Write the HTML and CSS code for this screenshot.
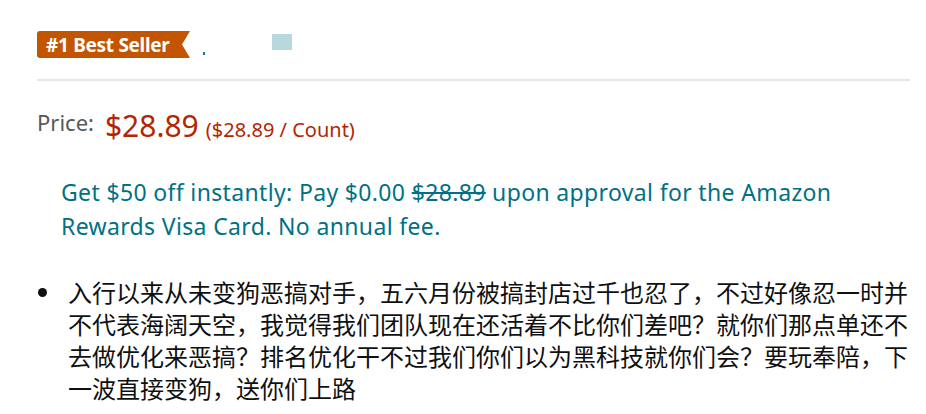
FILE: index.html
```html
<!DOCTYPE html>
<html lang="en">
<head>
<meta charset="utf-8">
<link rel="stylesheet" href="styles.css">
</head>
<body>
<div class="page">
  <div class="badge-row">
    <span class="badge">#1 Best Seller</span>
    <span class="dot"></span>
    <span class="square"></span>
  </div>
  <div class="divider"></div>
  <div class="price-row">
    <span class="price-label">Price:</span>
    <span class="price">$28.89</span>
    <span class="unit">($28.89 / Count)</span>
  </div>
  <p class="offer">Get $50 off instantly: Pay $0.00 <s>$28.89</s> upon approval for the Amazon Rewards Visa Card. No annual fee.</p>
  <ul class="bullets">
    <li>入行以来从未变狗恶搞对手，五六月份被搞封店过千也忍了，不过好像忍一时并不代表海阔天空，我觉得我们团队现在还活着不比你们差吧？就你们那点单还不去做优化来恶搞？排名优化干不过我们你们以为黑科技就你们会？要玩奉陪，下一波直接变狗，送你们上路</li>
  </ul>
</div>
</body>
</html>
```
FILE: styles.css
```css
html, body {
  margin: 0;
  background: #fff;
}
.page {
  width: 873px;
  margin-left: 37px;
  padding-top: 31px;
  font-family: "Noto Sans", "Open Sans", sans-serif;
}
.badge-row {
  display: flex;
  align-items: flex-start;
  height: 27px;
}
.badge {
  display: inline-flex;
  align-items: center;
  height: 27px;
  padding: 0 18px 0 9px;
  background: #c45500;
  color: #fff;
  font-weight: 700;
  font-size: 19px;
  letter-spacing: -0.3px;
  border-radius: 3px 0 0 3px;
  clip-path: polygon(0 0, 100% 0, calc(100% - 8px) 50%, 100% 100%, 0 100%);
  box-sizing: border-box;
  width: 153px;
  white-space: nowrap;
}
.dot {
  width: 2px;
  height: 3px;
  background: #0f7c90;
  margin: 21px 0 0 13px;
}
.square {
  width: 20px;
  height: 16px;
  background: #b7d8de;
  margin: 3px 0 0 67px;
}
.divider {
  height: 2px;
  background: #e7e7e7;
  margin-top: 21px;
}
.price-row {
  display: flex;
  align-items: baseline;
  margin-top: 24px;
  height: 42px;
}
.price-label {
  color: #565959;
  font-size: 22px;
  margin-right: 11px;
  position: relative;
  top: -6px;
}
.price {
  color: #b12704;
  font-size: 30px;
  margin-right: 7px;
}
.unit {
  color: #b12704;
  font-size: 20px;
}
.offer {
  width: 800px;
  margin: 28px 0 0 24px;
  color: #007185;
  font-size: 23px;
  letter-spacing: 0.35px;
  line-height: 34px;
}
.offer s {
  text-decoration-thickness: 2px;
}
.bullets {
  list-style: none;
  margin: 33px 0 0;
  padding: 0;
  color: #0f1111;
  font-family: "Noto Sans CJK SC", sans-serif;
  font-size: 24px;
  line-height: 32px;
}
.bullets li {
  display: flex;
  align-items: flex-start;
}
.bullets li::before {
  content: "";
  flex: none;
  width: 9px;
  height: 9px;
  border-radius: 50%;
  background: #0f1111;
  margin: 12px 21px 0 1px;
}
```
